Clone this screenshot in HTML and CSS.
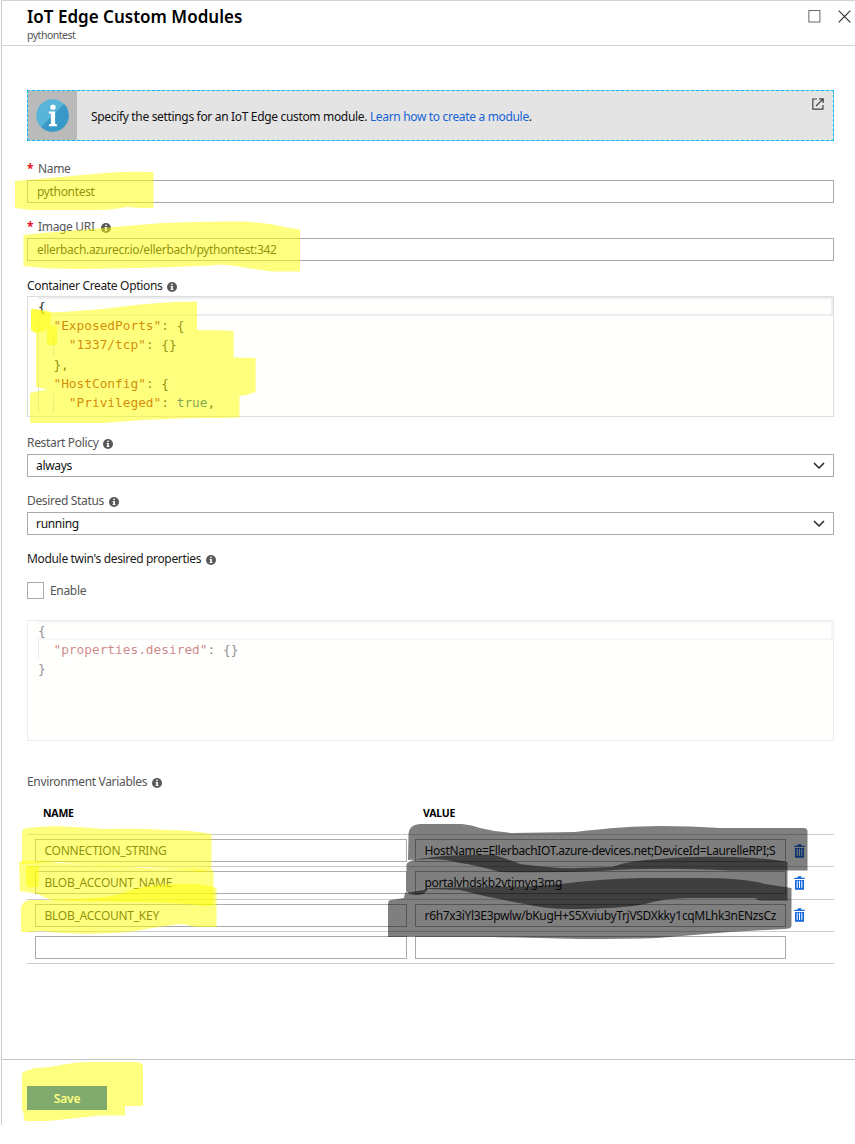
FILE: index.html
```html
<!DOCTYPE html>
<html lang="en">
<head>
<meta charset="utf-8">
<title>IoT Edge Custom Modules</title>
<link rel="stylesheet" href="styles.css">
</head>
<body>
<svg class="defs" width="0" height="0" aria-hidden="true">
  <symbol id="info" viewBox="0 0 10 10"><circle cx="5" cy="5" r="5" fill="#595959"/><path d="M4.2 1.7h1.7v1.4H4.2zM3.6 4h2.3v3.2h.6v.9H3.5v-.9h.7V4.9h-.6z" fill="#fff"/></symbol>
  <symbol id="trash" viewBox="0 0 11 14"><path d="M.3 1.700h3.400V.3h3.600v1.400h3.400v1.400H.3zM1 3.900h9V13.700H1z" fill="#1467dc"/><path d="M3.200 4.800v7.200M5.500 4.800v7.200M7.800 4.800v7.200" stroke="#fff" stroke-width="1"/></symbol>
  <symbol id="chevron" viewBox="0 0 12 8"><path d="M1 1l5 5 5-5" fill="none" stroke="#222" stroke-width="1.5"/></symbol>
</svg>
<main class="blade">
  <header class="head">
    <div>
      <h1 class="title">IoT Edge Custom Modules</h1>
      <p class="subtitle">pythontest</p>
    </div>
    <div class="window-actions">
      <svg width="13" height="13" viewBox="0 0 13 13"><rect x=".9" y=".5" width="11" height="11.5" fill="none" stroke="#666"/></svg>
      <svg width="13" height="13" viewBox="0 0 13 13"><path d="M.7.7l11.6 11.6M12.3.7L.7 12.3" stroke="#333" stroke-width="1.2"/></svg>
    </div>
  </header>

  <section class="content">
    <div class="notice">
      <div class="notice-icon">
        <svg width="33" height="33" viewBox="0 0 33 33"><circle cx="16.5" cy="16.5" r="16.2" fill="#59b4d9"/><path d="M28 5A16.2 16.2 0 0 1 5 28z" fill="#3999c6"/><circle cx="17" cy="8.3" r="2.7" fill="#fff"/><path d="M12.7 12.6h6.4v12.2l2 .7v1.8h-8.2v-1.8l2-.7V14.7l-2.2-.5z" fill="#fff"/></svg>
      </div>
      <p class="notice-text">Specify the settings for an IoT Edge custom module. <a class="link">Learn how to create a module</a>.</p>
      <svg class="popout" width="12" height="12" viewBox="0 0 12 12"><path d="M5 1H.8v10.2H11V7M7 .8h4.2V5M11 1L4 8" fill="none" stroke="#444" stroke-width="1.2"/></svg>
    </div>

    <div class="field name"><label class="label"><b class="req">*</b>Name</label><div class="input">pythontest</div></div>
    <div class="field uri"><label class="label"><b class="req">*</b>Image URI<svg class="info"><use href="#info"/></svg></label><div class="input">ellerbach.azurecr.io/ellerbach/pythontest:342</div></div>

    <div class="field options"><label class="label dark">Container Create Options<svg class="info"><use href="#info"/></svg></label>
      <div class="editor">
        <div class="line current">{</div>
        <div class="line g1">  <i class="s">"ExposedPorts"</i>: {</div>
        <div class="line g2">    <i class="s">"1337/tcp"</i>: {}</div>
        <div class="line g1">  },</div>
        <div class="line g1">  <i class="s">"HostConfig"</i>: {</div>
        <div class="line g2">    <i class="s">"Privileged"</i>: <i class="k">true</i>,</div>
      </div>
    </div>

    <div class="field restart"><label class="label">Restart Policy<svg class="info"><use href="#info"/></svg></label><div class="input select">always<svg width="12" height="8"><use href="#chevron"/></svg></div></div>
    <div class="field status"><label class="label">Desired Status<svg class="info"><use href="#info"/></svg></label><div class="input select">running<svg width="12" height="8"><use href="#chevron"/></svg></div></div>

    <div class="label dark twin">Module twin's desired properties<svg class="info"><use href="#info"/></svg></div>
    <div class="check"><span class="box"></span>Enable</div>
    <div class="editor disabled">
      <div class="line current">{</div>
      <div class="line g1">  <i class="s">"properties.desired"</i>: {}</div>
      <div class="line">}</div>
    </div>

    <div class="label env">Environment Variables<svg class="info"><use href="#info"/></svg></div>
    <div class="table">
      <div class="row thead"><span>NAME</span><span>VALUE</span></div>
      <div class="row"><div class="input key">CONNECTION_STRING</div><div class="input value"><span class="clip">HostName=EllerbachIOT.azure-devices.net;DeviceId=LaurelleRPI;S</span></div><svg width="11" height="14"><use href="#trash"/></svg></div>
      <div class="row"><div class="input key">BLOB_ACCOUNT_NAME</div><div class="input value"><span class="clip">portalvhdskb2vtjmyg3mg</span></div><svg width="11" height="14"><use href="#trash"/></svg></div>
      <div class="row"><div class="input key">BLOB_ACCOUNT_KEY</div><div class="input value"><span class="clip">r6h7x3iYl3E3pwlw/bKugH+S5XviubyTrjVSDXkky1cqMLhk3nENzsCz</span></div><svg width="11" height="14"><use href="#trash"/></svg></div>
      <div class="row"><div class="input"></div><div class="input value"></div></div>
    </div>
  </section>

  <footer class="foot"><button class="save">Save</button></footer>
</main>

<svg class="marks" width="855" height="1144" viewBox="0 0 855 1144" aria-hidden="true">
  <g fill="#ff0" fill-opacity=".5">
    <path d="M15 181C45 178 75 176 105 173Q130 171 153.500 172V208H141L127 207Q112 210 100 210H30L15 208z"/>
    <path d="M23.500 235Q50 232 80 230Q125 226 163 223Q205 221 243 221.500Q270 223 284 227L300 229.500V271.500H272Q252 269 235 266Q222 264 210 265.500Q150 268 80 269Q45 269 23.500 266z"/>
    <path d="M31 311Q31 309 33 309L49 312.500Q85 311 116 307.500Q155 302 197 301.500V330Q220 330 233.700 331V357.500L255.700 358V392Q248 395 239.500 396V417.500Q220 418 200 418Q145 419 104 423H30V393Q42 390 48 389.500L36 387V333Q31 332 31 329z"/>
    <path d="M31 311Q31 309 33 309Q46 310 51 312V324Q46 331 40 332Q36 334 31 329zM47 326Q51 325 57 326V345H47z"/>
    <path d="M22 832Q22 829 27 828Q50 825 75 827L105 829Q140 828 166 830Q190 830 211.500 834V869.500Q202 873 193 871Q175 869 143 867Q90 867 60 862L22 864z"/>
    <path d="M19 864Q19 861 22 861Q45 861 60 863Q90 866 115 866Q155 869 175 869L213.500 870V905Q207 907 197 905Q170 902 130 902L60 901Q50 901 38 894L20 891z"/>
    <path d="M26 866H39V886Q32 889 26 886z"/>
    <path d="M21 908Q23 900 31 900Q100 900 120 894Q145 883 180 884Q200 883 216.500 888V927H195Q185 924 180 924Q150 928 130 932Q80 936 42 931L31 932H21z"/>
    <path d="M22 1073Q31 1068 37 1068L50 1067Q75 1062 90 1062H135Q143 1062 143 1066V1106H125V1115.500H100L48 1121H26Q24 1121 24 1117L23 1111H22z"/>
  </g>
  <g fill="#000" fill-opacity=".5">
    <path d="M408.500 835Q408.500 825 420 824H462Q472 825 480 828Q496 832 512 833L575 832Q625 826 660 826Q690 826 720 828H804Q807 828 807.500 831V870.500H730Q655 867 600 871Q550 873 500 872Q475 865 460 863Q447 859 428 859L408 860z"/>
    <path d="M406.500 864Q410 859 428 858Q440 855 493 854.500Q510 860 520 864Q555 869 580 868L612 867Q630 860 660 859Q700 855 755 858Q767 859 776 860L787.500 862V900.500H761Q757 900 755 898L690 898Q665 898 645 904Q620 909 570 909Q545 909 525 904Q490 898 460 890L428 889L424 894Q416 896 409 894Q406 892 406.500 888z"/>
    <path d="M388 904Q388 900 391 900L404 898L405 893L424 890Q427 888 430 888Q480 887 530 886.500Q550 885 560 884Q600 879 640 878H700Q745 878 765 884L791.500 888V926Q791 929 784 929L730 932L657 938Q630 939 580 939L492 937H388z"/>
  </g>
</svg>
</body>
</html>
```
FILE: styles.css
```css
* { box-sizing: border-box; }
body { margin: 0; width: 855px; height: 1144px; overflow: hidden; position: relative; background: #fff; font-family: "Noto Sans", "Open Sans", sans-serif; font-size: 12px; letter-spacing: -.33px; color: #555; }
.defs { position: absolute; }
h1, p { margin: 0; }
.blade { display: flex; flex-direction: column; height: 1125px; margin-left: 1px; border-left: 1px solid #ccc; border-top: 1px solid #d4d4d4; }
.head { display: flex; justify-content: space-between; flex: none; height: 45px; padding: 5px 4px 0 25px; border-bottom: 1px solid #d4d4d4; }
.title { font-size: 17px; line-height: 22px; font-weight: 600; color: #000; letter-spacing: .01px; }
.subtitle { font-size: 10.500px; line-height: 14px; letter-spacing: -.5px; }
.window-actions { display: flex; gap: 17px; padding-top: 4px; }
.content { flex: none; width: 832px; padding: 44px 0 0 25px; height: 1013px; }
.notice { display: flex; height: 51px; border: 1px dashed #12b4ea; background: linear-gradient(#e4e4e4, #e4e4e4) padding-box, linear-gradient(#8fdcf3, #8fdcf3) border-box; color: #111; }
.notice-icon { width: 49px; display: flex; align-items: center; justify-content: center; background: #bababa; }
.notice-text { flex: 1; padding-left: 14px; line-height: 52px; height: 49px; }
.link { color: #1663d6; }
.popout { margin: 7px 9px; }
.field { display: flex; flex-direction: column; }
.label { display: flex; align-items: center; height: 22px; line-height: 22px; white-space: pre; }
.dark { color: #1a1a1a; }
.req { color: #e81123; font-size: 12px; width: 11px; }
.info { width: 10px; height: 10px; margin: 1px 0 0 5px; flex: none; }
.uri .info { margin-left: 6px; }
.input { height: 23px; line-height: 22px; border: 1px solid #aaa; background: #fff; padding-left: 9px; color: #222; overflow: hidden; white-space: nowrap; }
.name { margin-top: 17px; }
.uri { margin-top: 13px; }
.options { margin-top: 13px; }
.options .label { position: relative; top: 1px; }
.restart { margin-top: 15px; }
.status { margin-top: 13px; }
.select { display: flex; align-items: center; justify-content: space-between; padding: 0 8px; color: #111; line-height: 20px; }
.editor { height: 121px; border: 1px solid #ddd; background: #fffffd; padding-left: 10px; overflow: hidden; font: 12.800px/19.200px "DejaVu Sans Mono", monospace; letter-spacing: 0; color: #222; }
.line { height: 19.200px; white-space: pre; }
.line i { font-style: normal; }
.current { border: 2px solid #eee; border-left: 0; line-height: 16px; }
.g1 { background: linear-gradient(#ddd, #ddd) 0 0 / 1px 100% no-repeat; }
.g2 { background: linear-gradient(#ddd, #ddd) 0 0 / 1px 100% no-repeat, linear-gradient(#ddd, #ddd) 15px 0 / 1px 100% no-repeat; }
.s { color: #a31515; }
.k { color: #0451a5; }
.disabled { opacity: .5; margin-top: 21px; }
.twin { margin-top: 13px; }
.check { display: flex; align-items: center; gap: 6px; margin-top: 12px; height: 17px; }
.box { width: 17px; height: 17px; border: 1px solid #aaa; }
.env { margin-top: 30px; }
.row { display: grid; grid-template-columns: 372px 371px 11px; column-gap: 8px; align-items: center; height: 32.250px; padding-left: 8px; border-bottom: 1px solid #ccc; }
.row .input { padding-left: 8.500px; }
.row .key { letter-spacing: -.26px; }
.thead { height: 42px; font-weight: 700; font-size: 10.500px; color: #000; padding-bottom: 2px; }
.thead span { padding-left: 8px; letter-spacing: -.2px; }
.value { color: #111; padding-right: 8px; }
.clip { display: block; overflow: hidden; }
.foot { flex: 1; border-top: 1px solid #c4c4c4; padding: 26px 0 0 25px; }
.save { display: block; width: 80px; height: 24px; padding: 0; border: 0; background: #0055dd; color: #fff; font: 600 12px/25px "Noto Sans", sans-serif; letter-spacing: -.2px; }
.marks { position: absolute; left: 0; top: 0; pointer-events: none; }
```
